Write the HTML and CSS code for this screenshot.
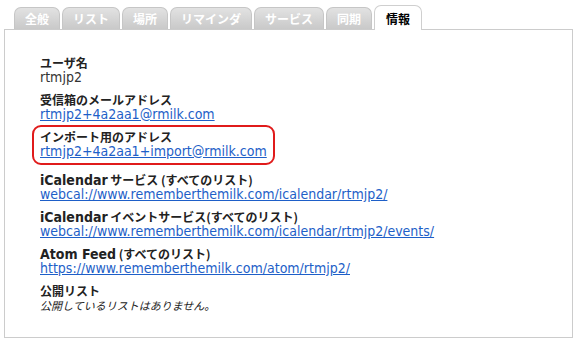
FILE: index.html
```html
<!DOCTYPE html>
<html lang="ja">
<head>
<meta charset="utf-8">
<link rel="stylesheet" href="styles.css">
</head>
<body>
<div class="page">
  <ul class="tabs">
    <li class="tab">全般</li>
    <li class="tab">リスト</li>
    <li class="tab">場所</li>
    <li class="tab">リマインダ</li>
    <li class="tab">サービス</li>
    <li class="tab">同期</li>
    <li class="tab active">情報</li>
  </ul>
  <div class="panel">
    <div class="field">
      <div class="label">ユーザ名</div>
      <div class="value">rtmjp2</div>
    </div>
    <div class="field">
      <div class="label">受信箱のメールアドレス</div>
      <a class="link" href="#">rtmjp2+4a2aa1@rmilk.com</a>
    </div>
    <div class="field highlight">
      <div class="label">インポート用のアドレス</div>
      <a class="link" href="#">rtmjp2+4a2aa1+import@rmilk.com</a>
    </div>
    <div class="field">
      <div class="label"><span class="latin">iCalendar</span> サービス (すべてのリスト)</div>
      <a class="link" href="#">webcal://www.rememberthemilk.com/icalendar/rtmjp2/</a>
    </div>
    <div class="field">
      <div class="label"><span class="latin">iCalendar</span> イベントサービス(すべてのリスト)</div>
      <a class="link" href="#">webcal://www.rememberthemilk.com/icalendar/rtmjp2/events/</a>
    </div>
    <div class="field">
      <div class="label"><span class="latin">Atom Feed</span> (すべてのリスト)</div>
      <a class="link" href="#">https://www.rememberthemilk.com/atom/rtmjp2/</a>
    </div>
    <div class="field">
      <div class="label">公開リスト</div>
      <div class="note">公開しているリストはありません。</div>
    </div>
  </div>
</div>
</body>
</html>
```

FILE: styles.css
```css
html, body {
  margin: 0;
  padding: 0;
  background: #ffffff;
}
body {
  font-family: "DejaVu Sans Condensed", "DejaVu Sans", "Noto Sans CJK JP", sans-serif;
  font-size: 14px;
  color: #222;
}
.page {
  padding: 4px 6px 0 4px;
}
.tabs {
  list-style: none;
  margin: 0;
  padding: 0 0 0 10px;
  display: flex;
  align-items: flex-end;
  gap: 2px;
  height: 25px;
}
.tab {
  height: 21px;
  line-height: 22px;
  padding: 0 10px;
  background: linear-gradient(#e2e2e2, #c9c9c9);
  border: 1px solid #c6c6c6;
  border-bottom: none;
  border-radius: 7px 7px 0 0;
  color: #ffffff;
  font-weight: bold;
  font-family: "Noto Sans CJK JP", sans-serif;
  font-size: 12px;
}
.tab.active {
  height: 24px;
  line-height: 26px;
  background: #ffffff;
  color: #000;
  border-color: #cfcfcf;
  position: relative;
  top: 1px;
  padding: 0 11px;
}
.panel {
  border: 1px solid #cccccc;
  height: 282px;
  padding: 25px 0 0 35px;
  display: flex;
  flex-direction: column;
  gap: 7px;
}
.field {
  display: flex;
  flex-direction: column;
  align-items: flex-start;
}
.label, .link, .value, .note {
  display: block;
  height: 15px;
  line-height: 15px;
  white-space: nowrap;
}
.label {
  font-weight: bold;
  color: #222;
  font-family: "Noto Sans CJK JP", sans-serif;
  font-size: 12px;
}
.latin {
  font-family: "DejaVu Sans Condensed", "DejaVu Sans", sans-serif;
  font-size: 14px;
  line-height: 15px;
}
.value {
  color: #333;
}
.note {
  font-family: "Noto Sans CJK JP", sans-serif;
  font-style: italic;
  font-size: 11px;
  color: #222;
}
.link {
  color: #1e5fc8;
  text-decoration: underline;
}
.highlight {
  margin: -4px 0 0 -8px;
  padding: 2px 6px 4px 6px;
  border: 2px solid #e01b1b;
  border-radius: 9px;
  align-self: flex-start;
}
```
